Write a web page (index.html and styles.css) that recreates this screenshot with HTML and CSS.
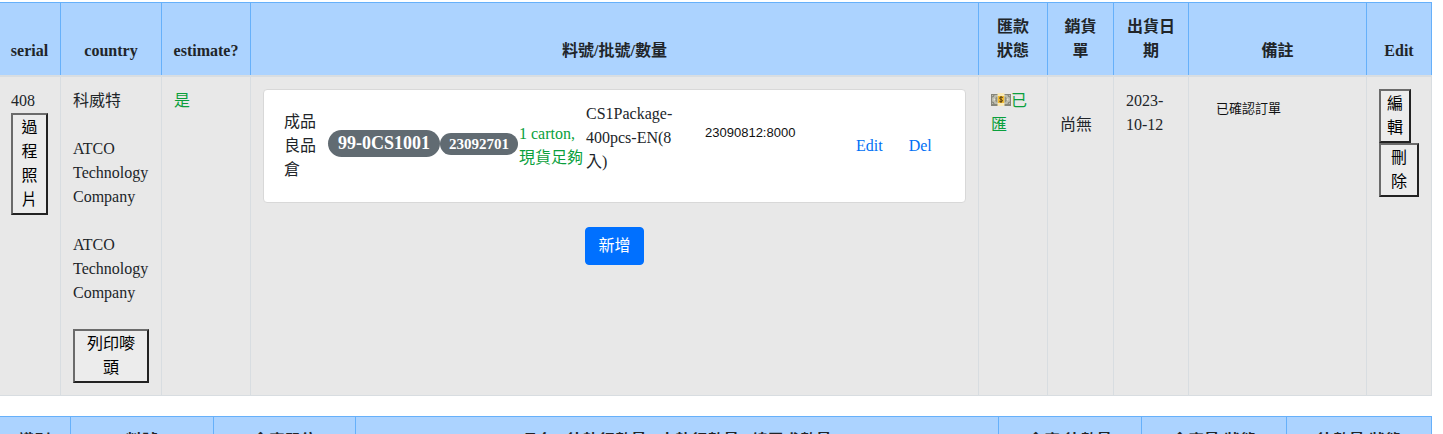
FILE: index.html
```html
<!DOCTYPE html>
<html lang="zh-Hant">
<head>
<meta charset="utf-8">
<title>Orders</title>
<link rel="stylesheet" href="styles.css">
</head>
<body>
<table class="table orders">
  <colgroup>
    <col class="c-serial"><col class="c-country"><col class="c-estimate"><col><col class="c-paid"><col class="c-sales"><col class="c-date"><col class="c-note"><col class="c-edit">
  </colgroup>
  <thead>
    <tr>
      <th>serial</th><th>country</th><th>estimate?</th><th>料號/批號/數量</th><th>匯款狀態</th><th>銷貨單</th><th>出貨日期</th><th>備註</th><th>Edit</th>
    </tr>
  </thead>
  <tbody>
    <tr>
      <td>408<br><button class="plain full" type="button">過程照片</button></td>
      <td>科威特<br><br>ATCO Technology Company<br><br>ATCO Technology Company<br><br><button class="plain full" type="button">列印嘜頭</button></td>
      <td class="ok">是</td>
      <td>
        <div class="card">
          <div class="store">成品良品倉</div>
          <span class="badge badge-lg">99-0CS1001</span>
          <span class="badge">23092701</span>
          <div class="stock ok">1 carton, 現貨足夠</div>
          <p class="desc">CS1Package-400pcs-EN(8入)</p>
          <textarea class="lot" rows="2" aria-label="批號" readonly>23090812:8000</textarea>
          <a class="link" href="#">Edit</a>
          <a class="link" href="#">Del</a>
        </div>
        <div class="actions"><button class="primary" type="button">新增</button></div>
      </td>
      <td class="ok"><svg class="money" viewBox="0 0 20 14" aria-hidden="true">
        <rect x="0" y="1" width="20" height="12" fill="#86867a"/>
        <rect x="1" y="2" width="18" height="9" fill="#bcbcae"/>
        <path d="M1 4Q3 4 3 2M1 9Q3 9 3 11M19 4Q17 4 17 2M19 9Q17 9 17 11" fill="none" stroke="#7a7a70"/>
        <ellipse cx="10" cy="6.500" rx="6" ry="4" fill="#92927f"/>
        <circle cx="3.500" cy="6.500" r="1" fill="#e2e2d8"/><circle cx="16.500" cy="6.500" r="1" fill="#e2e2d8"/>
        <rect x="6.500" y="0" width="7" height="13" fill="#f9eab8"/>
        <rect x="7" y="3" width="6" height="7" fill="#f4bd32"/>
        <path d="M11.800 4.500Q10 3.700 8.700 4.700Q8.500 6 10 6.500Q12 7 11.300 8.200Q10 9 8.300 8.300M10 3V10" fill="none" stroke="#5b4012" stroke-width="1"/>
      </svg>已匯</td>
      <td><br>尚無</td>
      <td>2023-10-12</td>
      <td><textarea class="note" rows="2" aria-label="備註" readonly>已確認訂單</textarea></td>
      <td><button class="plain narrow" type="button">編輯</button><button class="plain full" type="button">刪除</button></td>
    </tr>
  </tbody>
</table>
<table class="table stock-table">
  <colgroup>
    <col class="s-id"><col class="s-mid"><col class="s-unit"><col><col class="s-mid"><col class="s-wide"><col class="s-wide">
  </colgroup>
  <thead>
    <tr>
      <th>識別</th><th>料號</th><th>倉庫單位</th><th>品名 / 待執行數量 / 未執行數量 / 總需求數量</th><th>倉庫/待數量</th><th>倉庫量/狀態</th><th>待數量/狀態</th>
    </tr>
  </thead>
</table>
</body>
</html>
```
FILE: styles.css
```css
* { box-sizing: border-box; }

body {
  height: 100vh;
  margin: 0;
  padding: 2px 11px 0 0;
  overflow: hidden;
  background: #fff;
  color: #212529;
  font: 16px/24px "Liberation Serif", "Noto Sans CJK TC", serif;
}

.table {
  width: calc(100% + 2px);
  margin: 0 0 20px -2px;
  border-collapse: collapse;
  table-layout: fixed;
}

.table th,
.table td {
  padding: 12px;
  border: 1px solid #d8dde1;
}

.table th {
  vertical-align: bottom;
  text-align: center;
  background: #acd3ff;
  border-color: #66b0fa;
}

.orders th { border-bottom: 2px solid #d8dde1; }

.table td {
  vertical-align: top;
  background: #e8e8e8;
}

.c-serial { width: 62px; }
.c-country { width: 101px; }
.c-estimate { width: 89px; }
.c-paid { width: 69px; }
.c-sales { width: 66px; }
.c-date { width: 75px; }
.c-note { width: 178px; }
.c-edit { width: 65px; }
.s-id { width: 72px; }
.s-mid { width: 143px; }
.s-unit { width: 142px; }
.s-wide { width: 145px; }
.orders th { padding-left: 8px; padding-right: 8px; }
.orders th:nth-child(n+5) { padding-left: 12px; padding-right: 12px; }

.ok { color: #0a9f3c; }

.card {
  display: flex;
  align-items: center;
  padding: 12px 20px;
  background: #fff;
  border: 1px solid #d8d8d8;
  border-radius: 4px;
}

.store { flex: 0 0 44px; padding-right: 10px; }

.badge {
  flex: none;
  margin-bottom: 5px;
  padding: 3px 9px;
  border-radius: 160px;
  background: #616b72;
  color: #fff;
  font-size: 15px;
  font-weight: 700;
  line-height: 16px;
}

.badge-lg {
  padding: 4px 10px;
  font-size: 18px;
  line-height: 19px;
}

.stock { flex: 0 0 68px; padding-left: 1px; }
.desc { flex: 0 0 90px; margin: 0 0 16px; overflow-wrap: break-word; }

textarea {
  display: block;
  border: 0;
  background: transparent;
  color: #111;
  font: 13px/20px "Liberation Sans", "Noto Sans CJK TC", sans-serif;
  resize: none;
  overflow: hidden;
}

.lot { flex: 0 0 151px; margin-left: 29px; padding: 0 0 6px; }
.note { width: 100%; padding: 10px 15px; }

.link { color: #0070f5; text-decoration: none; margin-right: 26px; }

.actions { display: flex; justify-content: center; margin-top: 24px; }

button {
  font: inherit;
  color: #000;
  text-align: center;
}

.plain {
  display: block;
  padding: 1px 6px;
  border: 2px solid;
  border-color: #6b6b6b #222 #222 #6b6b6b;
  background: #ececec;
}

.full { width: 100%; }
.narrow { width: 32px; }

.primary {
  padding: 6px 12px;
  border: 1px solid #0070ff;
  border-radius: 4px;
  background: #0070ff;
  color: #fff;
}

.money { width: 20px; height: 14px; vertical-align: -1px; }
```
